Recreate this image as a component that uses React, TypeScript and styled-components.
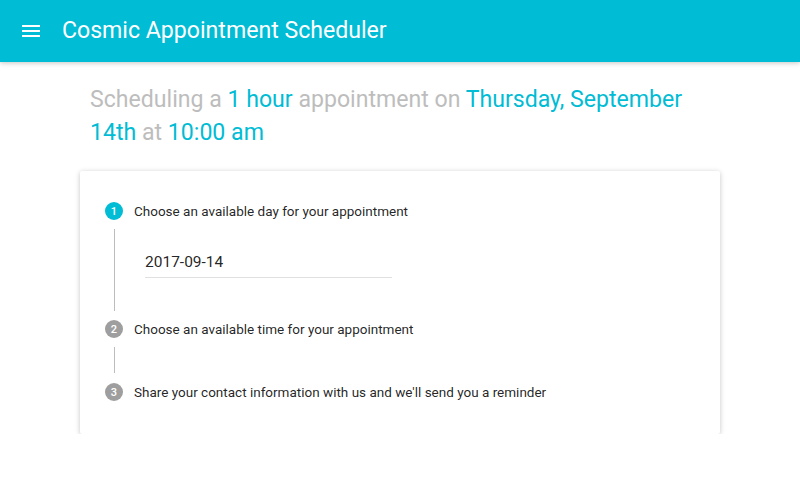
import React from "react";
import styled, { createGlobalStyle } from "styled-components";

const Global = createGlobalStyle`
  html, body { margin: 0; padding: 0; background: #fff; }
  body { font-family: Roboto, "Noto Sans", sans-serif; -webkit-font-smoothing: antialiased; }
`;

const AppBar = styled.header`
  height: 62px;
  background: #00bcd4;
  display: flex;
  align-items: center;
  padding-left: 19px;
  box-shadow: rgba(0, 0, 0, 0.12) 0 1px 6px, rgba(0, 0, 0, 0.12) 0 1px 4px;
  position: relative;
  z-index: 1;
`;

const MenuButton = styled.div`
  width: 24px;
  height: 24px;
  display: flex;
  color: #fff;
`;

const Title = styled.h1`
  margin: 0 0 0 19px;
  font-size: 23.1px;
  font-weight: 400;
  color: #fff;
  line-height: 62px;
  white-space: nowrap;
`;

const Main = styled.main`
  width: 80%;
  margin: 0 auto;
`;

const Heading = styled.h2`
  margin: 21px 0 22px;
  padding: 0 10px;
  font-size: 23.1px;
  line-height: 33px;
  font-weight: 400;
  color: #bdbdbd;
`;

const Hl = styled.span`
  color: #00bcd4;
`;

const Card = styled.section`
  background: #fff;
  border-radius: 2px;
  box-shadow: rgba(0, 0, 0, 0.12) 0 1px 6px, rgba(0, 0, 0, 0.12) 0 1px 4px;
  padding: 24px 24px 26px 25px;
`;

const StepRow = styled.div`
  height: 32px;
  display: flex;
  align-items: center;
`;

const StepIcon = styled.span<{ $active?: boolean }>`
  width: 18px;
  height: 18px;
  border-radius: 50%;
  background: ${(p) => (p.$active ? "#00bcd4" : "#9e9e9e")};
  color: #fff;
  font-size: 11px;
  font-weight: 500;
  display: flex;
  align-items: center;
  justify-content: center;
  flex-shrink: 0;
`;

const StepLabel = styled.span`
  margin-left: 11px;
  font-size: 13.5px;
  color: rgba(0, 0, 0, 0.87);
`;

const StepContent = styled.div`
  margin: 2px 0 2px 9px;
  border-left: 1px solid #bdbdbd;
  padding: 21px 0 33px 30px;
`;

const Connector = styled.div`
  margin: 2px 0 3px 9px;
  height: 26px;
  border-left: 1px solid #bdbdbd;
`;

const Field = styled.div`
  width: 247px;
  padding-bottom: 3px;
  border-bottom: 1px solid #e0e0e0;
  font-size: 15.5px;
  line-height: 24px;
  color: rgba(0, 0, 0, 0.87);
`;

const MenuIcon = () => (
  <svg width="24" height="24" viewBox="0 0 24 24" fill="currentColor">
    <path d="M3 18h18v-2H3v2zm0-5h18v-2H3v2zm0-7v2h18V6H3z" />
  </svg>
);

export default function App() {
  return (
    <>
      <Global />
      <AppBar>
        <MenuButton>
          <MenuIcon />
        </MenuButton>
        <Title>Cosmic Appointment Scheduler</Title>
      </AppBar>
      <Main>
        <Heading>
          Scheduling a <Hl>1 hour</Hl> appointment on <Hl>Thursday, September 14th</Hl> at{" "}
          <Hl>10:00 am</Hl>
        </Heading>
        <Card>
          <StepRow>
            <StepIcon $active>1</StepIcon>
            <StepLabel>Choose an available day for your appointment</StepLabel>
          </StepRow>
          <StepContent>
            <Field>2017-09-14</Field>
          </StepContent>
          <StepRow>
            <StepIcon>2</StepIcon>
            <StepLabel>Choose an available time for your appointment</StepLabel>
          </StepRow>
          <Connector />
          <StepRow>
            <StepIcon>3</StepIcon>
            <StepLabel>Share your contact information with us and we'll send you a reminder</StepLabel>
          </StepRow>
        </Card>
      </Main>
    </>
  );
}
